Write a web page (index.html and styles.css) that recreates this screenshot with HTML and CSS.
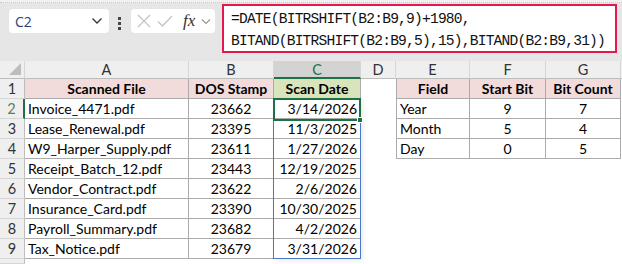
FILE: index.html
```html
<!DOCTYPE html>
<html lang="en">
<head>
  <meta charset="UTF-8">
  <title>Scan Dates</title>
  <link rel="stylesheet" href="styles.css">
</head>
<body>
  <div class="ribbon-edge"></div>
  <div class="toolbar">
    <div class="namebox">
      <span>C2</span>
      <svg class="chev" width="12" height="8" viewBox="0 0 12 8"><path d="M1.5 1.5 L6 6 L10.5 1.5" fill="none" stroke="#333" stroke-width="1.3"/></svg>
    </div>
    <div class="dots"><i></i><i></i><i></i></div>
    <div class="fxbox">
      <svg width="14" height="14" viewBox="0 0 14 14"><path d="M1 1 L13 13 M13 1 L1 13" stroke="#c4c4c4" stroke-width="1.3"/></svg>
      <svg width="16" height="14" viewBox="0 0 16 14"><path d="M1 7.5 L5.5 12 L15 2" fill="none" stroke="#c4c4c4" stroke-width="1.3"/></svg>
      <span class="fx">fx</span>
      <svg class="chev" width="10" height="7" viewBox="0 0 10 7"><path d="M1 1.5 L5 5.5 L9 1.5" fill="none" stroke="#999" stroke-width="1.2"/></svg>
    </div>
    <div class="formula">=DATE(BITRSHIFT(B2:B9,9)+1980,<br>BITAND(BITRSHIFT(B2:B9,5),15),BITAND(B2:B9,31))</div>
  </div>

  <div class="sheet">
    <div class="ch corner"><svg width="12" height="12" viewBox="0 0 12 12"><path d="M12 0 L12 12 L0 12 Z" fill="#bdbdbd"/></svg></div>
    <div class="ch">A</div>
    <div class="ch">B</div>
    <div class="ch sel">C</div>
    <div class="ch">D</div>
    <div class="ch">E</div>
    <div class="ch">F</div>
    <div class="ch">G</div>
    <div class="ch rest"></div>

    <div class="rh">1</div>
    <div class="c t hd">Scanned File</div>
    <div class="c t hd">DOS Stamp</div>
    <div class="c t hd green">Scan Date</div>
    <div class="c"></div>
    <div class="c t hd first">Field</div>
    <div class="c t hd">Start Bit</div>
    <div class="c t hd">Bit Count</div>
    <div class="c"></div>

    <div class="rh sel">2</div>
    <div class="c t l">Invoice_4471.pdf</div>
    <div class="c t m">23662</div>
    <div class="c t r">3/14/2026</div>
    <div class="c"></div>
    <div class="c t l first">Year</div>
    <div class="c t m">9</div>
    <div class="c t m">7</div>
    <div class="c"></div>

    <div class="rh">3</div>
    <div class="c t l">Lease_Renewal.pdf</div>
    <div class="c t m">23395</div>
    <div class="c t r">11/3/2025</div>
    <div class="c"></div>
    <div class="c t l first">Month</div>
    <div class="c t m">5</div>
    <div class="c t m">4</div>
    <div class="c"></div>

    <div class="rh">4</div>
    <div class="c t l">W9_Harper_Supply.pdf</div>
    <div class="c t m">23611</div>
    <div class="c t r">1/27/2026</div>
    <div class="c"></div>
    <div class="c t l first">Day</div>
    <div class="c t m">0</div>
    <div class="c t m">5</div>
    <div class="c"></div>

    <div class="rh">5</div>
    <div class="c t l">Receipt_Batch_12.pdf</div>
    <div class="c t m">23443</div>
    <div class="c t r">12/19/2025</div>
    <div class="c wide"></div>

    <div class="rh">6</div>
    <div class="c t l">Vendor_Contract.pdf</div>
    <div class="c t m">23622</div>
    <div class="c t r">2/6/2026</div>
    <div class="c wide"></div>

    <div class="rh">7</div>
    <div class="c t l">Insurance_Card.pdf</div>
    <div class="c t m">23390</div>
    <div class="c t r">10/30/2025</div>
    <div class="c wide"></div>

    <div class="rh">8</div>
    <div class="c t l">Payroll_Summary.pdf</div>
    <div class="c t m">23682</div>
    <div class="c t r">4/2/2026</div>
    <div class="c wide"></div>

    <div class="rh">9</div>
    <div class="c t l">Tax_Notice.pdf</div>
    <div class="c t m">23679</div>
    <div class="c t r">3/31/2026</div>
    <div class="c wide"></div>

    <div class="rh"></div>
    <div class="c all"></div>

    <div class="spill"></div>
    <div class="active"><span class="handle"></span></div>
  </div>
</body>
</html>
```

FILE: styles.css
```css
* {
  box-sizing: border-box;
}

body {
  margin: 0;
  width: 622px;
  height: 264px;
  overflow: hidden;
  background: #fff;
  font-family: Lato, "Liberation Sans", sans-serif;
  font-size: 14px;
  color: #000;
}

.ribbon-edge {
  height: 3px;
  background: #f1f1f1;
  border-bottom: 1px dotted #c8c8c8;
}

.toolbar {
  height: 58px;
  background: #e6e6e6;
  display: flex;
  align-items: flex-start;
  padding: 1px 0 0 9px;
}

.namebox {
  margin-top: 5px;
  width: 100px;
  height: 24px;
  background: #fff;
  border-radius: 4px;
  display: flex;
  align-items: center;
  justify-content: space-between;
  padding: 0 6px 0 6px;
  font-family: "Open Sans", sans-serif;
  font-size: 14px;
  color: #1f3f7a;
}

.dots {
  margin: 13px 10px 0 9px;
  display: flex;
  flex-direction: column;
  gap: 2px;
}

.dots i {
  display: block;
  width: 3px;
  height: 3px;
  background: #444;
}

.fxbox {
  margin-top: 5px;
  width: 84px;
  height: 24px;
  background: #fff;
  border-radius: 4px;
  display: flex;
  align-items: center;
  gap: 6px;
  padding: 0 0 0 6px;
}

.fxbox .fx {
  font-family: "Liberation Serif", serif;
  font-style: italic;
  font-size: 17px;
  color: #333;
  margin-left: 4px;
}

.formula {
  margin-left: 7px;
  width: 395px;
  height: 49px;
  background: #fff;
  border: 2px solid #e3184b;
  padding: 2px 0 0 7px;
  font-family: "Liberation Mono", monospace;
  font-size: 14.6px;
  letter-spacing: -0.8px;
  line-height: 22px;
  color: #111;
  white-space: nowrap;
}

.sheet {
  position: relative;
  display: grid;
  grid-template-columns: 25px 164px 85px 87px 35px 74px 76px 75px 1fr;
  grid-template-rows: 18px repeat(9, 20px) 1fr;
  height: 203px;
}

.ch {
  background: #efefef;
  border-right: 1px solid #d6d6d6;
  border-bottom: 1px solid #bdbdbd;
  text-align: center;
  line-height: 17px;
  color: #333;
  font-size: 14.5px;
}

.ch.sel {
  background: #d3d3d3;
  color: #1e7145;
  border-bottom: 2px solid #1e7145;
}

.ch.corner {
  display: flex;
  align-items: flex-end;
  justify-content: flex-end;
  padding: 0 3px 3px 0;
}

.ch.rest {
  border-right: none;
}

.rh {
  background: #efefef;
  border-right: 1px solid #bdbdbd;
  border-bottom: 1px solid #d6d6d6;
  text-align: center;
  line-height: 19px;
  color: #333;
  font-size: 14.5px;
}

.rh.sel {
  color: #5a7f5e;
  border-right: 2px solid #1e7145;
}

.c {
  background: #fff;
  line-height: 20px;
  white-space: nowrap;
  overflow: hidden;
}

.c.wide {
  grid-column: 5 / 10;
}

.c.all {
  grid-column: 2 / 10;
}

.t {
  border-right: 1px solid #ababab;
  border-bottom: 1px solid #ababab;
}

.t.first {
  border-left: 1px solid #ababab;
}

.hd {
  background: #f2dcdb;
  font-weight: bold;
  text-align: center;
}

.hd.green {
  background: #d8e4bc;
}

.l {
  padding-left: 3px;
}

.m {
  text-align: center;
}

.r {
  text-align: right;
  padding-right: 3px;
}

/* spill range and active cell sit over the grid */
.spill {
  position: absolute;
  left: 273px;
  top: 37px;
  width: 88px;
  height: 161px;
  border: 1px solid #4a78c8;
  box-shadow: 2px 2px 5px rgba(0, 0, 0, 0.08);
  pointer-events: none;
}

.active {
  position: absolute;
  left: 273px;
  top: 37px;
  width: 88px;
  height: 23px;
  border: 2px solid #1e7145;
  pointer-events: none;
}

.handle {
  position: absolute;
  right: -4px;
  bottom: -4px;
  width: 6px;
  height: 6px;
  background: #1e7145;
  border: 1px solid #fff;
}
```
